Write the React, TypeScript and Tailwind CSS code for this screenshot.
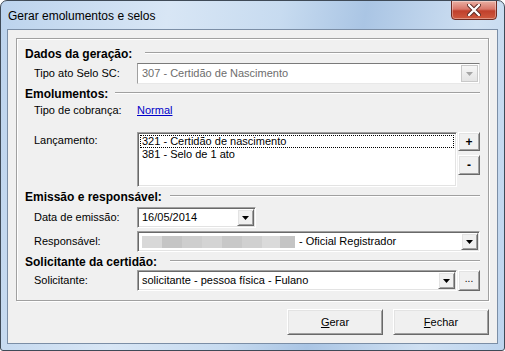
import React from "react";

const sunken =
  "border border-t-[#a0a0a0] border-l-[#a0a0a0] border-r-white border-b-white shadow-[inset_1px_1px_0_#696969,inset_-1px_-1px_0_#e3e3e3] bg-white";
const raised =
  "border border-t-white border-l-white border-r-[#696969] border-b-[#696969] shadow-[inset_1px_1px_0_#e3e3e3,inset_-1px_-1px_0_#a0a0a0] bg-[#f0f0f0]";

function Arrow({ color = "#000" }: { color?: string }) {
  return (
    <svg width="7" height="4" viewBox="0 0 7 4">
      <path d="M0 0h7L3.5 4z" fill={color} />
    </svg>
  );
}

function DropBtn() {
  return (
    <div className={`${raised} w-[17px] h-full flex items-center justify-center`}>
      <Arrow />
    </div>
  );
}

function Combo({
  className = "",
  children,
}: {
  className?: string;
  children: React.ReactNode;
}) {
  return (
    <div className={`${sunken} h-[21px] flex items-stretch p-[1px] ${className}`}>
      <div className="flex-1 flex items-center pl-[3px] overflow-hidden whitespace-nowrap">
        {children}
      </div>
      <DropBtn />
    </div>
  );
}

function Header({ text, w }: { text: string; w: string }) {
  return (
    <div className="h-[16px] flex items-center pl-[8px] pr-[8px]">
      <div className={`${w} shrink-0 font-bold text-[12px] text-black leading-none`}>{text}</div>
      <div className="flex-1 h-[2px] border-t border-t-[#a0a0a0] border-b border-b-white -mt-[2px]" />
    </div>
  );
}

function Label({ children }: { children: React.ReactNode }) {
  return <div className="w-[103px] shrink-0 text-[11px]">{children}</div>;
}

export default function App() {
  const blocks = [
    "w-[20px] bg-[#d8d8d8]",
    "w-[20px] bg-[#c5c5c5]",
    "w-[20px] bg-[#cecece]",
    "w-[20px] bg-[#d4d4d4]",
    "w-[20px] bg-[#c8c8c8]",
    "w-[20px] bg-[#d0d0d0]",
    "w-[18px] bg-[#dadada]",
    "w-[15px] bg-[#c4c4c4]",
  ];
  return (
    <div className="w-[505px] h-[351px] font-['Liberation_Sans',Arial,sans-serif] text-black">
      <div className="w-[505px] h-[351px] border border-[#3f4a57] rounded-t-[7px] rounded-b-[3px] bg-[linear-gradient(100deg,#bcd3ed_0%,#d8e6f5_30%,#c7dbf0_50%,#aac5e4_65%,#cfe0f2_85%,#bdd4ee_100%)] flex flex-col overflow-hidden">
        {/* Title bar */}
        <div className="h-[28px] flex items-start">
          <div className="pl-[7px] pt-[8px] text-[12px] leading-[14px] text-black">
            Gerar emolumentos e selos
          </div>
          <div className="ml-auto mr-[7px] -mt-[1px] w-[46px] h-[20px] rounded-b-[4px] border border-[#6e2b22] bg-[linear-gradient(#eab0a3_0%,#d9776a_45%,#c0402c_55%,#cf5a3f_100%)] shadow-[inset_0_0_0_1px_rgba(255,255,255,0.35)] flex items-center justify-center">
            <svg width="14" height="12" viewBox="0 0 14 12">
              <path
                d="M2 1 L12 11 M12 1 L2 11"
                stroke="#5a2a24"
                strokeWidth="4.2"
                strokeLinecap="round"
              />
              <path
                d="M2 1 L12 11 M12 1 L2 11"
                stroke="#ffffff"
                strokeWidth="2.4"
                strokeLinecap="round"
              />
            </svg>
          </div>
        </div>
        {/* Client area */}
        <div className="mx-[6px] h-[315px] border border-[#7b8ea6] bg-[#f0f0f0] flex flex-col px-[8px] pt-[8px]">
          <div className="h-[263px] border border-[#a0a0a0] shadow-[inset_1px_1px_0_#fff,1px_1px_0_#fff] flex flex-col pt-[7px] text-[11px]">
            <Header text="Dados da geração:" w="w-[120px]" />
            <div className="mt-[1px] h-[21px] flex items-center pl-[17px] pr-[8px]">
              <Label>Tipo ato Selo SC:</Label>
              <div className="flex-1 h-[21px] border border-t-[#7a7a7a] border-l-[#a0a0a0] border-r-[#dcdcdc] border-b-[#e8e8e8] bg-white flex items-stretch p-[1px]">
                <div className="flex-1 flex items-center pl-[3px] text-[#6d6d6d] whitespace-nowrap">
                  307 - Certidão de Nascimento
                </div>
                <div className="w-[17px] border border-[#c9c9c9] bg-[linear-gradient(#f6f6f6,#e4e4e4)] flex items-center justify-center">
                  <Arrow color="#a6a6a6" />
                </div>
              </div>
            </div>
            <div className="mt-[2px]">
              <Header text="Emolumentos:" w="w-[90px]" />
            </div>
            <div className="h-[16px] flex items-center pl-[17px]">
              <Label>Tipo de cobrança:</Label>
              <span className="text-[#0000c8] underline">Normal</span>
            </div>
            <div className="mt-[14px] h-[55px] flex items-start pl-[17px] pr-[8px]">
              <div className="w-[103px] shrink-0 pt-[1px] leading-[14px]">Lançamento:</div>
              <div className={`${sunken} w-[320px] h-[55px] p-[2px] flex flex-col`}>
                <div className="h-[13px] border border-dotted border-black flex items-center pl-[1px] leading-none">
                  321 - Certidão de nascimento
                </div>
                <div className="h-[13px] flex items-center pl-[2px] leading-none">
                  381 - Selo de 1 ato
                </div>
              </div>
              <div className="ml-[1px] flex flex-col">
                <div className={`${raised} w-[22px] h-[19px] flex items-center justify-center font-bold text-[12px] leading-none`}>
                  +
                </div>
                <div className={`${raised} mt-[4px] w-[22px] h-[20px] flex items-center justify-center font-bold text-[12px] leading-none`}>
                  -
                </div>
              </div>
            </div>
            <div className="mt-[2px]">
              <Header text="Emissão e responsável:" w="w-[145px]" />
            </div>
            <div className="mt-[2px] h-[21px] flex items-center pl-[17px]">
              <Label>Data de emissão:</Label>
              <Combo className="w-[119px]">16/05/2014</Combo>
            </div>
            <div className="mt-[3px] h-[21px] flex items-center pl-[17px] pr-[8px]">
              <Label>Responsável:</Label>
              <Combo className="flex-1">
                <div className="flex h-[12px]">
                  {blocks.map((b, i) => (
                    <div key={i} className={`${b} h-[12px]`} />
                  ))}
                </div>
                <span className="ml-[4px]">- Oficial Registrador</span>
              </Combo>
            </div>
            <div className="mt-[2px]">
              <Header text="Solicitante da certidão:" w="w-[145px]" />
            </div>
            <div className="h-[21px] flex items-center pl-[17px] pr-[8px]">
              <Label>Solicitante:</Label>
              <Combo className="w-[320px]">solicitante - pessoa física - Fulano</Combo>
              <div className={`${raised} ml-[1px] w-[22px] h-[21px] flex items-center justify-center text-[10px] leading-none pb-[3px]`}>
                ...
              </div>
            </div>
          </div>
          <div className="mt-[8px] flex justify-end gap-[10px] pr-[0px]">
            <div className={`${raised} w-[96px] h-[26px] flex items-center justify-center text-[11px]`}>
              <span>
                <span className="underline">G</span>erar
              </span>
            </div>
            <div className={`${raised} w-[96px] h-[26px] flex items-center justify-center text-[11px]`}>
              <span>
                <span className="underline">F</span>echar
              </span>
            </div>
          </div>
        </div>
      </div>
    </div>
  );
}
